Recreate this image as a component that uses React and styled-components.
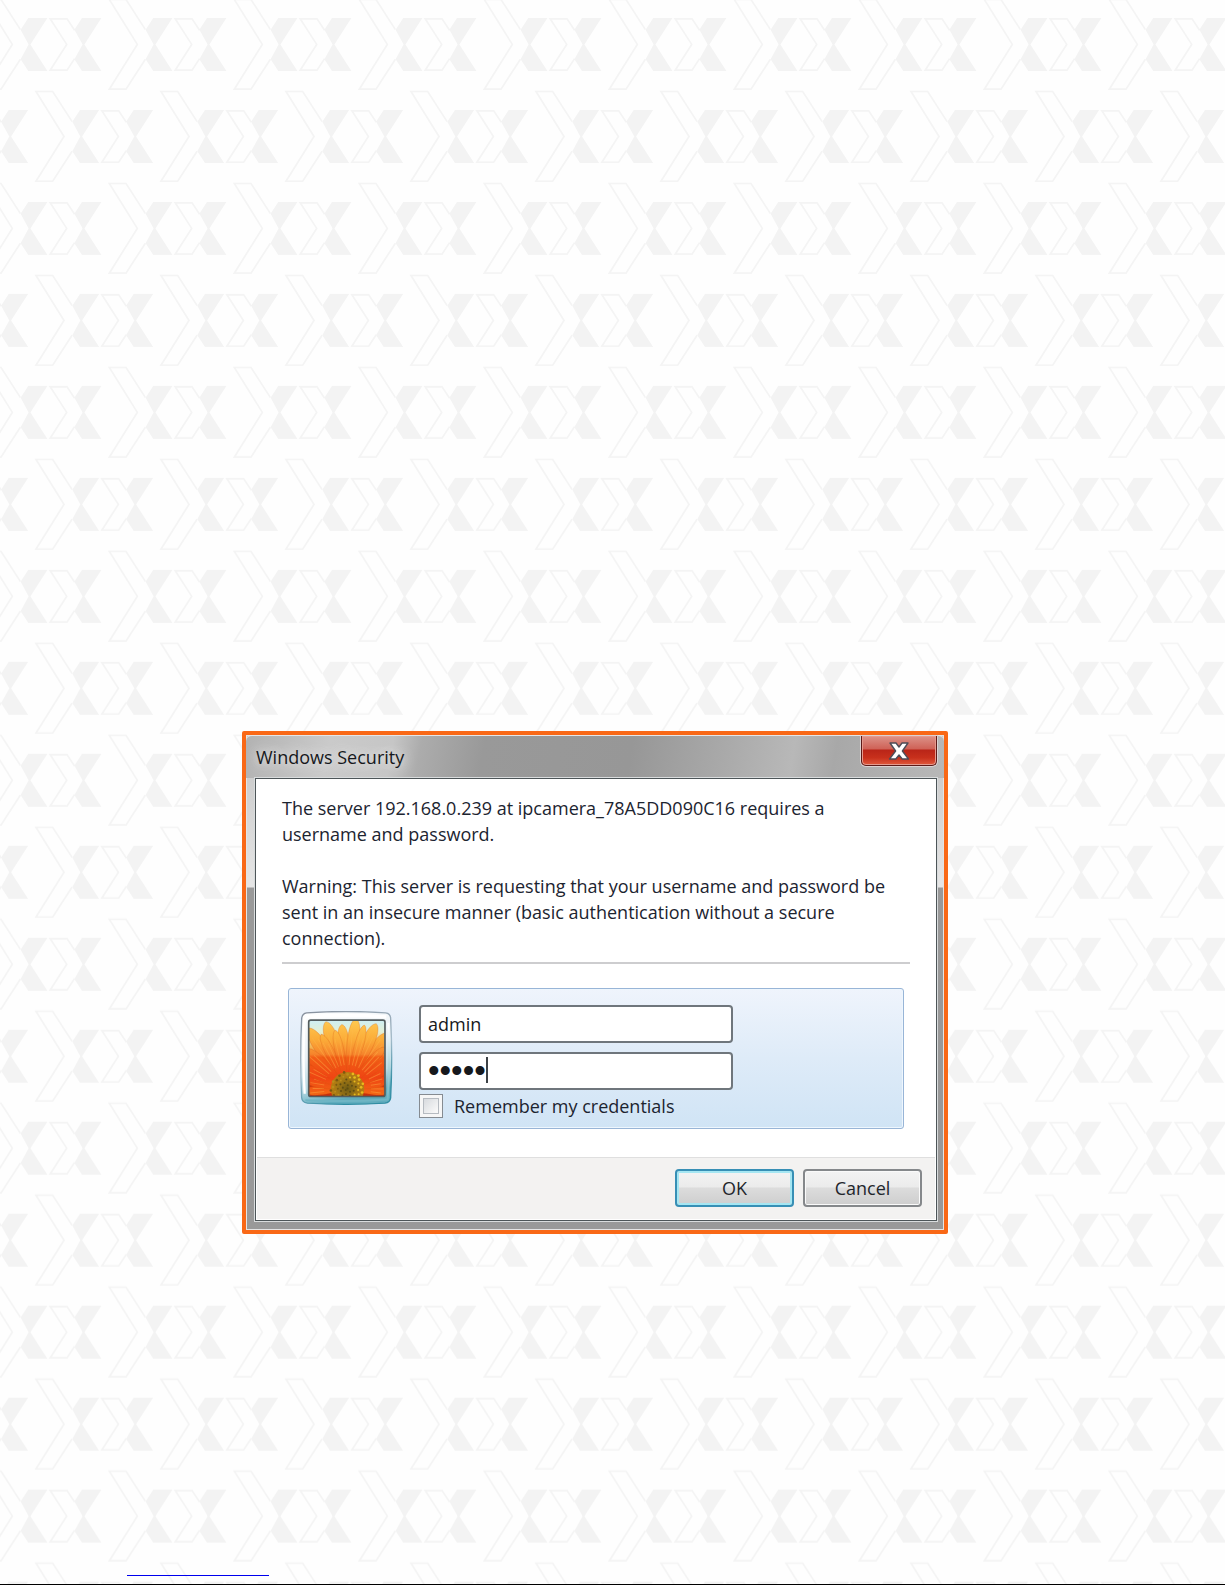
import React, { useState } from "react";
import styled, { createGlobalStyle, css } from "styled-components";

const GlobalStyle = createGlobalStyle`
  * {
    box-sizing: border-box;
  }

  body {
    margin: 0;
    color: #1c2430;
    background: #fefefe;
    font-family: "Open Sans", "Noto Sans", sans-serif;
    font-size: 18px;
    line-height: 26px;
  }
`;

const Page = styled.main`
  position: relative;
  display: flex;
  flex-direction: column;
  min-height: 100vh;
  padding: 731px 277px 0 242px;
  border-bottom: 1px solid #000;
`;

const Backdrop = styled.svg`
  position: absolute;
  inset: 0;
  width: 100%;
  height: 100%;
`;

const Window = styled.section`
  position: relative;
  padding: 0 7px 9px 9px;
  border: 4px solid #f96816;
  border-radius: 2px;
  box-shadow: inset 0 0 0 1px #e4e4e4;
  background: linear-gradient(#c4c4c4, #e6e6e6 152px, #999 153px, #999);
`;

const TitleBar = styled.header`
  display: flex;
  align-items: flex-start;
  justify-content: space-between;
  height: 43px;
  margin: 0 -7px 0 -9px;
  padding: 0 7px 0 10px;
  border-top: 1px solid #e6e6e6;
  border-radius: 6px 6px 0 0;
  background: linear-gradient(
    100deg,
    #b2b2b2,
    #cacaca 12%,
    #c6c6c6 21%,
    #acacac 25%,
    #999 34%,
    #979797 55%,
    #a9a9a9 68%,
    #b8b8b8 78%,
    #a8a8a8 84%,
    #b8b8b8
  );
`;

const Title = styled.h1`
  margin: 8px 0 0;
  color: #16181c;
  font-size: 18px;
  font-weight: 400;
  line-height: 26px;
  text-shadow: 0 0 10px #e8e8e8, 0 0 14px #e0e0e0;
`;

const CloseButton = styled.button`
  display: flex;
  align-items: center;
  justify-content: center;
  width: 76px;
  height: 30px;
  padding: 0;
  border: 1px solid #5c1a18;
  border-top: 0;
  border-radius: 0 0 5px 5px;
  box-shadow: 0 0 0 1px #dcd2d2, inset 0 0 0 1px #e59a8e;
  background: linear-gradient(#dc9389, #cf6156 45%, #b92518 48%, #c8301c 75%, #e0593c);
`;

const Client = styled.div`
  border: 1px solid #4d5558;
  box-shadow: 0 0 0 1px #d9dcdd;
  background: #fff;
`;

const Message = styled.div`
  margin: 0 26px;
  padding: 16px 0 11px;
  border-bottom: 2px solid #cdcdcf;

  p {
    margin: 0;
  }

  p + p {
    margin-top: 26px;
  }
`;

const Credentials = styled.div`
  display: flex;
  gap: 26px;
  margin: 24px 32px 28px;
  padding: 16px 11px 10px;
  border: 1px solid #98b5d7;
  border-radius: 3px;
  box-shadow: inset 0 0 0 1px #eef6fd;
  background: linear-gradient(#eff4fc, #deebf8 50%, #d0e4f5);
`;

const UserTile = styled.svg`
  flex: none;
  width: 93px;
  height: 94px;
  margin-top: 6px;
`;

const Fields = styled.div`
  display: flex;
  flex-direction: column;
  gap: 9px;
  width: 314px;
`;

const Field = styled.div`
  position: relative;
  display: flex;
`;

const TextBox = styled.input`
  width: 100%;
  height: 38px;
  padding: 0 7px;
  border: 2px solid #6f767c;
  border-radius: 4px;
  outline: none;
  background: #fff;
  color: #16181c;
  caret-color: transparent;
  font-family: inherit;
  font-size: 18px;

  &[type="password"] {
    font-family: "Liberation Sans", sans-serif;
    font-size: 33px;
  }
`;

const Caret = styled.span`
  position: absolute;
  top: 5px;
  left: 67px;
  width: 2px;
  height: 26px;
  background: #3c4146;
`;

const Remember = styled.label`
  display: flex;
  align-items: center;
  gap: 11px;
  height: 24px;
  margin-top: -5px;
`;

const CheckBox = styled.input`
  appearance: none;
  width: 24px;
  height: 24px;
  margin: 0;
  border: 1px solid #858b91;
  box-shadow: inset 0 0 0 3px #f6f6f6, inset 0 0 0 4px #b6bbc1;
  background: linear-gradient(135deg, #cdd1d6, #f8f8f8 75%);

  &:checked {
    background: #4a6f9c;
  }
`;

const Actions = styled.footer`
  display: flex;
  justify-content: flex-end;
  gap: 9px;
  padding: 12px 13px;
  border: solid #fff;
  border-width: 0 1px 1px;
  box-shadow: inset 0 1px 0 #dfdfdf;
  background: #f3f2f1;
`;

const Button = styled.button`
  width: 119px;
  height: 38px;
  padding: 0;
  border: 2px solid #85888b;
  border-radius: 4px;
  box-shadow: inset 0 0 0 1px #fafafa;
  background: linear-gradient(#f3f3f3, #ebebeb 47%, #dcdcdc 50%, #cecece);
  color: #22262c;
  font-family: inherit;
  font-size: 18px;

  ${({ $primary }) =>
    $primary &&
    css`
      border-color: #378fb5;
      box-shadow: inset 0 0 0 2px #a5e6f2;
    `}
`;

const FootLink = styled.a`
  align-self: flex-start;
  width: 142px;
  margin: auto 0 8px -115px;
  border-bottom: 1px solid #0000ee;
  position: relative;
`;

const Motif = ({ x, y }) => (
  <g transform={`translate(${x} ${y})`}>
    <path
      d="M145.4 29.6L126 -.5H109.3L137.3 44.4L109.3 89.2H126L145.4 59.2M199.6 30.2L192 18.8H175.2L191.7 44.4L175.2 70.2H192L199.6 58.6"
      fill="none"
      stroke="#f4f4f4"
      strokeWidth="1.7"
    />
    <path
      d="M153.3 18H172.4L155.4 44.4L172.4 71H153.3L145.6 59.2L153.6 44.4L145.6 29.8ZM207 18H226.4L209.4 44.4L226.4 71H207L199.4 59.2L207.6 44.4L199.4 29.8Z"
      fill="#f3f3f3"
    />
  </g>
);

const PageBackdrop = () => (
  <Backdrop aria-hidden="true">
    <defs>
      <pattern id="motifs" width="125" height="183.96" patternUnits="userSpaceOnUse">
        {[-250, -125, 0].map(x => (
          <React.Fragment key={x}>
            <Motif x={x} y={0} />
            <Motif x={x} y={183.96} />
            <Motif x={x + 51.7} y={92} />
          </React.Fragment>
        ))}
      </pattern>
    </defs>
    <rect width="100%" height="100%" fill="url(#motifs)" />
  </Backdrop>
);

// angle from straight up, length, half width
const petals = [
  [-94, 130, 17],
  [94, 125, 17],
  [-78, 130, 20],
  [78, 125, 20],
  [-64, 145, 22],
  [62, 135, 22],
  [-33, 215, 25],
  [36, 205, 25],
  [-48, 175, 26],
  [50, 160, 24],
  [-5, 192, 22],
  [-18, 210, 25],
  [7, 210, 23],
  [24, 212, 24],
  [-26, 180, 17],
  [15, 196, 17],
  [-12, 178, 17],
  [42, 165, 17]
];

const seeds = Array.from({ length: 54 }, (_, i) => {
  const angle = i * 2.4;
  const r = 7 * Math.sqrt(i);
  return [160 + r * Math.cos(angle), 246 + r * Math.sin(angle), i];
});

const Flower = () => (
  <UserTile viewBox="18 15 278 280" role="img" aria-label="User picture">
    <defs>
      <linearGradient id="frame" x1="0" y1="0" x2=".25" y2="1">
        <stop offset="0" stopColor="#ffffff" />
        <stop offset=".5" stopColor="#e8f0f5" />
        <stop offset=".8" stopColor="#bcdce5" />
        <stop offset="1" stopColor="#5facbd" />
      </linearGradient>
      <linearGradient id="rim" x1="0" y1="0" x2=".4" y2="1">
        <stop offset="0" stopColor="#858e9b" />
        <stop offset=".6" stopColor="#a4bbc9" />
        <stop offset="1" stopColor="#318da3" />
      </linearGradient>
      <linearGradient id="shade" gradientUnits="userSpaceOnUse" x1="0" y1="60" x2="0" y2="280">
        <stop offset="0" stopColor="#ffffff" />
        <stop offset="1" stopColor="#6fb5c4" />
      </linearGradient>
      <linearGradient id="sky" x1="0" y1="0" x2="0" y2="1">
        <stop offset="0" stopColor="#cfeff3" />
        <stop offset=".15" stopColor="#e4f0d4" />
        <stop offset=".35" stopColor="#f4b754" />
        <stop offset=".6" stopColor="#e94812" />
        <stop offset="1" stopColor="#c52d0c" />
      </linearGradient>
      <linearGradient id="petal" gradientUnits="userSpaceOnUse" x1="0" y1="45" x2="0" y2="270">
        <stop offset="0" stopColor="#ffc84f" />
        <stop offset=".25" stopColor="#fbab38" />
        <stop offset=".44" stopColor="#f6842c" />
        <stop offset=".48" stopColor="#f25e16" />
        <stop offset=".75" stopColor="#ef4513" />
        <stop offset="1" stopColor="#f36a16" />
      </linearGradient>
      <radialGradient id="core">
        <stop offset="0" stopColor="#6f5c14" />
        <stop offset=".65" stopColor="#a57914" />
        <stop offset="1" stopColor="#b97c10" />
      </radialGradient>
      <clipPath id="photo">
        <rect x="45" y="43" width="226" height="226" />
      </clipPath>
    </defs>
    <path
      d="M38 20Q156 12 274 20Q289 22 289 38Q295 156 289 274Q287 288 272 290Q156 297 40 290Q24 288 23 274Q17 156 23 38Q24 22 38 20Z"
      fill="url(#frame)"
      stroke="url(#rim)"
      strokeWidth="4"
    />
    <path d="M36 32Q156 24 276 32" fill="none" stroke="#fff" strokeWidth="10" />
    <path d="M32 34Q25 156 32 262" fill="none" stroke="#fff" strokeWidth="7" />
    <path d="M34 281Q156 287 280 279Q287 170 282 50" fill="none" stroke="url(#shade)" strokeWidth="6" />
    <g clipPath="url(#photo)">
      <rect x="45" y="43" width="226" height="226" fill="url(#sky)" />
      {petals.map(([angle, length, half]) => {
        // the gradient stays upright, so points are rotated here
        const rad = (angle * Math.PI) / 180;
        const at = (along, side) =>
          `${160 + along * Math.sin(rad) + side * Math.cos(rad)} ${
            246 - along * Math.cos(rad) + side * Math.sin(rad)
          }`;
        return (
          <g key={angle}>
            <path
              d={`M${at(20, -5)}C${at(length * 0.6, -half)} ${at(length * 0.95, -half)} ${at(
                length,
                0
              )}C${at(length * 0.95, half)} ${at(length * 0.6, half)} ${at(20, 5)}Z`}
              fill="url(#petal)"
              stroke="#d45110"
              strokeOpacity=".4"
              strokeWidth="2"
            />
            <path
              d={`M${at(70, -4)}L${at(length * 0.86, -6)}M${at(70, 5)}L${at(length * 0.8, 7)}`}
              stroke="#ffb84a"
              strokeOpacity=".4"
              strokeWidth="3"
            />
          </g>
        );
      })}
      <circle cx="160" cy="247" r="50" fill="url(#core)" />
      {seeds.map(([x, y, i]) => (
        <circle
          key={i}
          cx={x}
          cy={y}
          r={i > 30 ? 4 : 3}
          fill={i < 16 ? "#5f4d12" : x > 165 ? "#e8bb1d" : i % 2 ? "#7d5a10" : "#b98d1b"}
        />
      ))}
    </g>
    <rect x="44" y="42" width="228" height="228" rx="6" fill="none" stroke="#535c5d" strokeWidth="5" />
  </UserTile>
);

const CloseIcon = () => (
  <svg width="22" height="18" viewBox="0 0 22 18" aria-hidden="true">
    <path
      d="M2 1H8L11 5L14 1H20L14.4 9L20.5 17H14.2L11 13L7.8 17H1.5L7.6 9Z"
      fill="#fff"
      stroke="#4e4c57"
      strokeWidth="1.4"
      strokeLinejoin="round"
    />
  </svg>
);

const App = () => {
  const [username, setUsername] = useState("admin");
  const [password, setPassword] = useState("admin");
  const [remember, setRemember] = useState(false);

  return (
    <>
      <GlobalStyle />
      <Page>
        <PageBackdrop />
        <Window role="dialog" aria-labelledby="title">
          <TitleBar>
            <Title id="title">Windows Security</Title>
            <CloseButton type="button" aria-label="Close">
              <CloseIcon />
            </CloseButton>
          </TitleBar>
          <Client>
            <Message>
              <p>
                The server 192.168.0.239 at ipcamera_78A5DD090C16 requires a
                <br />
                username and password.
              </p>
              <p>
                Warning: This server is requesting that your username and password be
                <br />
                sent in an insecure manner (basic authentication without a secure
                <br />
                connection).
              </p>
            </Message>
            <Credentials>
              <Flower />
              <Fields>
                <Field>
                  <TextBox
                    type="text"
                    aria-label="User name"
                    value={username}
                    onChange={e => setUsername(e.target.value)}
                  />
                </Field>
                <Field>
                  <TextBox
                    type="password"
                    aria-label="Password"
                    value={password}
                    onChange={e => setPassword(e.target.value)}
                  />
                  <Caret />
                </Field>
                <Remember>
                  <CheckBox
                    type="checkbox"
                    checked={remember}
                    onChange={e => setRemember(e.target.checked)}
                  />
                  Remember my credentials
                </Remember>
              </Fields>
            </Credentials>
            <Actions>
              <Button type="submit" $primary>
                OK
              </Button>
              <Button type="button">Cancel</Button>
            </Actions>
          </Client>
        </Window>
        <FootLink href="#top" aria-label="Link" />
      </Page>
    </>
  );
};

export default App;
